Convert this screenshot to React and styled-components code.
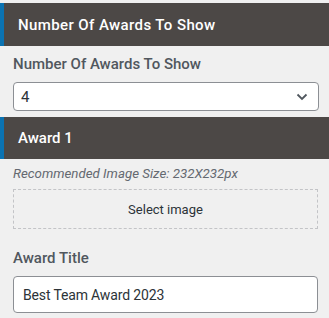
import styled, { createGlobalStyle } from "styled-components";

const GlobalStyle = createGlobalStyle`
  body {
    margin: 0;
    background: #f0f0f0;
    font-family: Roboto, "Liberation Sans", sans-serif;
  }
`;

const Panel = styled.div`
  display: flex;
  flex-direction: column;
  padding-top: 3px;
  width: 329px;
`;

const SectionHeader = styled.div`
  display: flex;
  align-items: center;
  height: ${(props) => props.height}px;
  margin-top: ${(props) => props.top || 0}px;
  padding-left: 14px;
  border-left: 4px solid #0b73b2;
  background: #4c4846;
  color: #ffffff;
  font-size: 15px;
  font-weight: 500;
  letter-spacing: ${(props) => props.spacing || 0}px;
`;

const Field = styled.div`
  display: flex;
  flex-direction: column;
  padding: 0 11px 0 13px;
`;

const Label = styled.div`
  margin-top: ${(props) => props.top}px;
  line-height: 20px;
  font-size: 15px;
  font-weight: 500;
  color: #50575e;
`;

const SelectBox = styled.div`
  display: flex;
  align-items: center;
  justify-content: space-between;
  box-sizing: border-box;
  height: 29px;
  margin-top: 8px;
  margin-right: -1px;
  padding: 0 10px 0 7px;
  background: #ffffff;
  border: 1px solid #8c8f94;
  border-radius: 4px;
  font-size: 15px;
  color: #2c3338;
`;

const Hint = styled.div`
  margin-top: 6px;
  line-height: 18px;
  font-size: 13.3px;
  font-style: italic;
  color: #646970;
`;

const ImageDrop = styled.div`
  display: flex;
  align-items: center;
  justify-content: center;
  box-sizing: border-box;
  height: 40px;
  margin-top: 6px;
  border: 1px dashed #c3c4c7;
  font-size: 13px;
  color: #2c3338;
`;

const TextInput = styled.div`
  display: flex;
  align-items: center;
  box-sizing: border-box;
  height: 37px;
  margin-top: 8px;
  padding-left: 9px;
  background: #ffffff;
  border: 1px solid #8c8f94;
  border-radius: 4px;
  font-size: 14px;
  letter-spacing: -0.15px;
  color: #2c3338;
`;

const Chevron = () => (
  <svg width="12" height="8" viewBox="0 0 12 8">
    <path d="M1.5 1.5 L6 6 L10.5 1.5" fill="none" stroke="#50575e" strokeWidth="1.8" />
  </svg>
);

const App = () => (
  <Panel>
    <GlobalStyle />
    <SectionHeader height={43} spacing={0.4}>
      Number Of Awards To Show
    </SectionHeader>
    <Field>
      <Label top={8}>Number Of Awards To Show</Label>
      <SelectBox>
        <span>4</span>
        <Chevron />
      </SelectBox>
    </Field>
    <SectionHeader height={42} top={6}>
      Award 1
    </SectionHeader>
    <Field>
      <Hint>Recommended Image Size: 232X232px</Hint>
      <ImageDrop>Select image</ImageDrop>
      <Label top={19}>Award Title</Label>
      <TextInput>Best Team Award 2023</TextInput>
    </Field>
  </Panel>
);

export default App;
